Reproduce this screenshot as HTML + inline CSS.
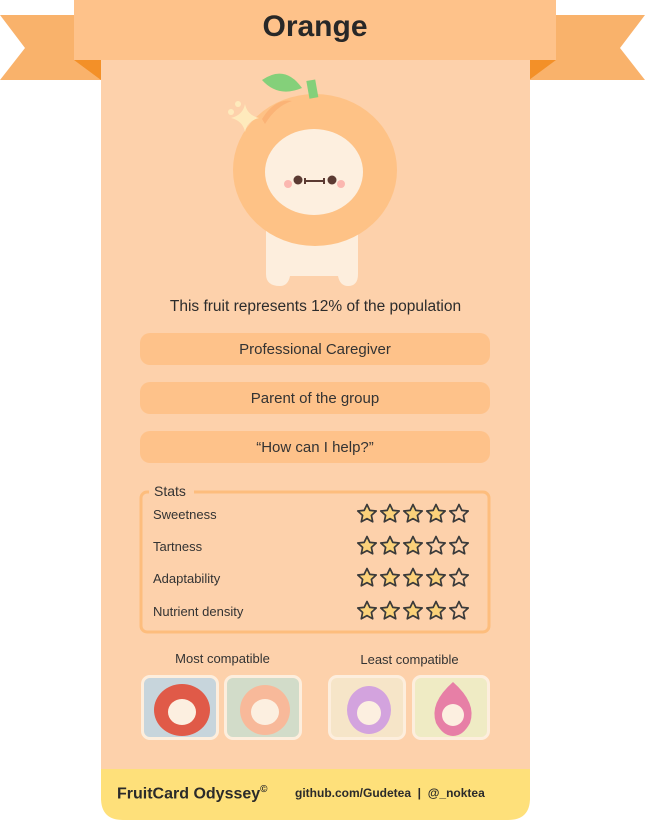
<!DOCTYPE html>
<html><head><meta charset="utf-8"><style>
*{margin:0;padding:0;box-sizing:border-box}
body{width:645px;height:820px;background:#fff;position:relative;overflow:hidden;font-family:"Liberation Sans",sans-serif;color:#333}
.a{position:absolute}
.pill{position:absolute;left:140px;width:350px;height:32px;background:#fec28a;border-radius:10px;text-align:center;line-height:34px;font-size:15px;color:#333}
.lbl{position:absolute;left:153px;font-size:13px;color:#333}
.tile{position:absolute;top:675px;width:78px;height:65px;border:3px solid #fdeedd;border-radius:9px;overflow:hidden}
</style></head><body>
<svg class="a" style="left:0;top:0" width="645" height="820">
<polygon points="0,15 101,15 101,80 0,80 25,48" fill="#f9b26b"/>
<polygon points="645,15 529,15 529,80 645,80 620,48" fill="#f9b26b"/>
<polygon points="74,60 101,60 101,80" fill="#f39028"/>
<polygon points="556,60 529,60 529,80" fill="#f39028"/>
<rect x="101" y="60" width="429" height="740" fill="#fdd1ab"/>
<path d="M101 769 H530 V798 Q530 820 508 820 H123 Q101 820 101 798 Z" fill="#fee07a"/>
<rect x="74" y="0" width="482" height="60" fill="#fec28a"/>
<path d="M266 225 H358 V274 Q358 286 348 286 Q340 286 338 276 H290 Q288 286 280 286 Q266 286 266 274Z" fill="#fdeedd"/>
<ellipse cx="315" cy="170" rx="82" ry="76" fill="#fec286"/>
<path d="M262 119 Q275 98 292 101 Q276 106 265 124Z" fill="#f9a86c" opacity=".6"/>
<ellipse cx="314" cy="172" rx="49" ry="43" fill="#fdefdf"/>
<path d="M262 80 Q285 64 302 88 Q278 98 262 80Z" fill="#84d07a"/>
<rect x="308" y="80" width="9" height="18" fill="#84d07a" transform="rotate(-10 313 90)"/>
<path d="M245 104 Q247 115 259 118 Q247 121 245 132 Q243 121 231 118 Q243 115 245 104Z" fill="#feeabc"/>
<circle cx="238" cy="104" r="3" fill="#feeabc"/><circle cx="231" cy="112" r="3" fill="#feeabc"/>
<circle cx="298" cy="180" r="4.5" fill="#5b3a32"/><circle cx="332" cy="180" r="4.5" fill="#5b3a32"/>
<path d="M305 181 H324 M305 178 V184 M324 178 V184" stroke="#5b3a32" stroke-width="2"/>
<circle cx="288" cy="184" r="4" fill="#fbb7b0"/><circle cx="341" cy="184" r="4" fill="#fbb7b0"/>
<rect x="141" y="492" width="348" height="140" rx="6" fill="none" stroke="#fdbd7d" stroke-width="3"/>
<rect x="149" y="483" width="45" height="18" rx="5" fill="#fdd1ab"/>
</svg>
<div class="a" style="left:74px;width:482px;top:10px;text-align:center;font-size:30px;font-weight:bold;color:#282828">Orange</div>
<div class="a" style="left:101px;width:429px;top:298px;text-align:center;font-size:15.5px;color:#2c2c2c">This fruit represents 12% of the population</div>
<div class="pill" style="top:333px">Professional Caregiver</div>
<div class="pill" style="top:382px">Parent of the group</div>
<div class="pill" style="top:431px">“How can I help?”</div>
<div class="a" style="left:154px;top:483px;font-size:14px">Stats</div>
<div class="lbl" style="top:507px">Sweetness</div>
<div class="lbl" style="top:539px">Tartness</div>
<div class="lbl" style="top:571px">Adaptability</div>
<div class="lbl" style="top:604px">Nutrient density</div>
<svg class="a" style="left:0;top:0" width="645" height="820">
<defs><path id="s" d="M0,-9.5 L2.8,-3.6 9.2,-3 4.4,1.4 5.7,7.8 0,4.6 -5.7,7.8 -4.4,1.4 -9.2,-3 -2.8,-3.6Z" stroke="#3a3a3a" stroke-width="1.7" stroke-linejoin="round"/></defs>
<g fill="#fbd27a">
<use href="#s" x="367" y="514"/><use href="#s" x="390" y="514"/><use href="#s" x="413" y="514"/><use href="#s" x="436" y="514"/>
<use href="#s" x="367" y="546"/><use href="#s" x="390" y="546"/><use href="#s" x="413" y="546"/>
<use href="#s" x="367" y="578"/><use href="#s" x="390" y="578"/><use href="#s" x="413" y="578"/><use href="#s" x="436" y="578"/>
<use href="#s" x="367" y="611"/><use href="#s" x="390" y="611"/><use href="#s" x="413" y="611"/><use href="#s" x="436" y="611"/>
</g>
<g fill="none"><use href="#s" x="459" y="514"/><use href="#s" x="436" y="546"/><use href="#s" x="459" y="546"/><use href="#s" x="459" y="578"/><use href="#s" x="459" y="611"/></g>
</svg>
<div class="a" style="left:141px;width:163px;top:651px;text-align:center;font-size:13px">Most compatible</div>
<div class="a" style="left:328px;width:163px;top:652px;text-align:center;font-size:13px">Least compatible</div>
<div class="tile" style="left:141px;background:#c7d5dc"><svg width="72" height="59"><ellipse cx="38" cy="32" rx="28" ry="26" fill="#e05a48"/><ellipse cx="38" cy="34" rx="14" ry="13" fill="#fcefe0"/></svg></div>
<div class="tile" style="left:224px;background:#d2dcc9"><svg width="72" height="59"><ellipse cx="38" cy="32" rx="25" ry="25" fill="#f8b99a"/><ellipse cx="38" cy="34" rx="14" ry="13" fill="#fcefe0"/></svg></div>
<div class="tile" style="left:328px;background:#f6e5c8"><svg width="72" height="59"><ellipse cx="38" cy="32" rx="22" ry="24" fill="#d3a3de"/><ellipse cx="38" cy="35" rx="12" ry="12" fill="#fcefe0"/></svg></div>
<div class="tile" style="left:412px;background:#efebc4"><svg width="72" height="59"><path d="M38 4 Q62 25 55 45 Q48 58 38 58 Q28 58 21 45 Q14 25 38 4Z" fill="#e77fa6"/><ellipse cx="38" cy="37" rx="11" ry="11" fill="#fcefe0"/></svg></div>
<div class="a" style="left:117px;top:784px;font-size:16px;font-weight:bold;color:#2a2a2a">FruitCard Odyssey<sup style="font-size:10px">©</sup></div>
<div class="a" style="left:295px;top:786px;font-size:12px;font-weight:bold;color:#2a2a2a">github.com/Gudetea &nbsp;|&nbsp; @_noktea</div>
</body></html>
